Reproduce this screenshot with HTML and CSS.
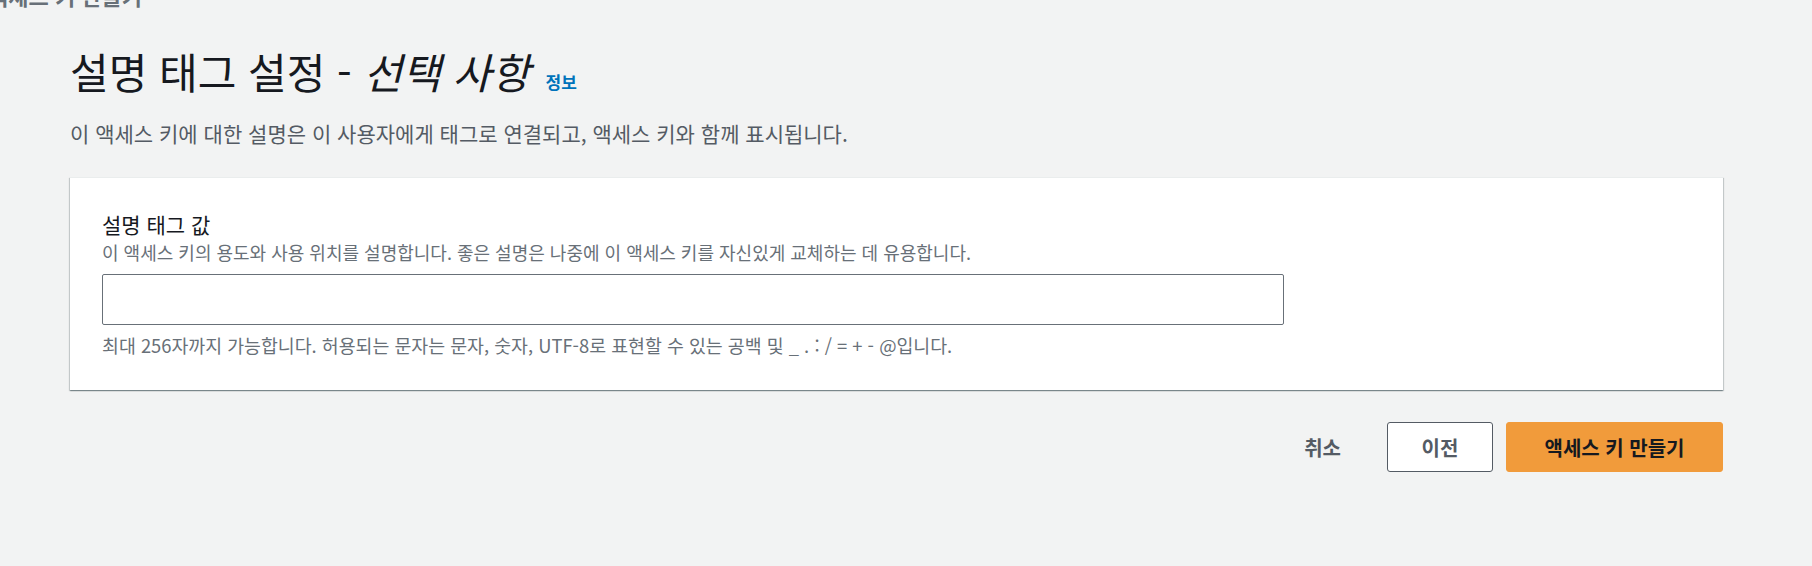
FILE: index.html
```html
<!DOCTYPE html>
<html lang="ko">
<head>
  <meta charset="UTF-8">
  <meta name="viewport" content="width=device-width, initial-scale=1.0">
  <title>액세스 키 만들기</title>
  <link rel="stylesheet" href="styles.css">
</head>
<body>
  <div class="page-title">액세스 키 만들기</div>
  <main class="wizard">
    <header class="step-header">
      <h1>설명 태그 설정 - <i>선택 사항</i> <a href="#" class="info-link">정보</a></h1>
      <p class="step-desc">이 액세스 키에 대한 설명은 이 사용자에게 태그로 연결되고, 액세스 키와 함께 표시됩니다.</p>
    </header>

    <section class="card">
      <label class="field-label" for="tag-value">설명 태그 값</label>
      <p class="field-desc">이 액세스 키의 용도와 사용 위치를 설명합니다. 좋은 설명은 나중에 이 액세스 키를 자신있게 교체하는 데 유용합니다.</p>
      <input type="text" id="tag-value" class="field-input">
      <p class="field-hint">최대 256자까지 가능합니다. 허용되는 문자는 문자, 숫자, UTF-8로 표현할 수 있는 공백 및 _ . : / = + - @입니다.</p>
    </section>

    <div class="actions">
      <button type="button" class="btn btn-link">취소</button>
      <button type="button" class="btn btn-normal">이전</button>
      <button type="submit" class="btn btn-primary">액세스 키 만들기</button>
    </div>
  </main>
</body>
</html>
```

FILE: styles.css
```css
body {
  margin: 0;
  background: #f2f3f3;
  font-family: "Noto Sans CJK KR", "Noto Sans", sans-serif;
  color: #16191f;
  overflow: hidden;
}

.page-title {
  margin: -17px 0 0 -12px;
  font-size: 22px;
  line-height: 24px;
  font-weight: bold;
  color: #687078;
}

.wizard {
  margin-left: 70px;
  width: 1653px;
}

.step-header h1 {
  margin: 39px 0 0;
  font-size: 42px;
  line-height: 50px;
  font-weight: 400;
}

.step-header h1 i {
  font-style: italic;
}

.info-link {
  margin-left: 4px;
  font-size: 17px;
  font-weight: bold;
  color: #0073bb;
  text-decoration: none;
}

.step-desc {
  margin: 12px 0 0;
  font-size: 21px;
  line-height: 28px;
  color: #545b64;
}

.card {
  margin-top: 30px;
  padding: 32px 32px 33px;
  background: #fff;
  border-top: 1px solid #eaeded;
  box-shadow: 0 1px 1px 0 rgba(0, 28, 36, 0.3), 1px 1px 1px 0 rgba(0, 28, 36, 0.15), -1px 1px 1px 0 rgba(0, 28, 36, 0.15);
}

.field-label {
  display: block;
  font-size: 21px;
  line-height: 28px;
  color: #16191f;
}

.field-desc {
  margin: 2px 0 0;
  font-size: 18px;
  line-height: 24px;
  color: #687078;
}

.field-input {
  display: block;
  box-sizing: border-box;
  width: 1182px;
  height: 51px;
  margin-top: 10px;
  padding: 0 12px;
  border: 1px solid #687078;
  border-radius: 2px;
  background: #fff;
  font: inherit;
  font-size: 18px;
}

.field-hint {
  margin: 8px 0 0;
  font-size: 18.35px;
  line-height: 24px;
  color: #687078;
}

.actions {
  display: flex;
  justify-content: flex-end;
  align-items: center;
  margin-top: 32px;
}

.btn {
  height: 50px;
  padding: 0 30px;
  border-radius: 3px;
  font-family: inherit;
  font-size: 20px;
  font-weight: bold;
  cursor: pointer;
}

.btn-link {
  padding: 0 22px;
  margin-right: 24px;
  border: none;
  background: none;
  color: #545b64;
}

.btn-normal {
  width: 106px;
  border: 1px solid #545b64;
  background: #fff;
  color: #545b64;
}

.btn-primary {
  width: 217px;
  margin-left: 13px;
  border: 1px solid #f19b3b;
  background: #f19b3b;
  color: #16191f;
}
```
